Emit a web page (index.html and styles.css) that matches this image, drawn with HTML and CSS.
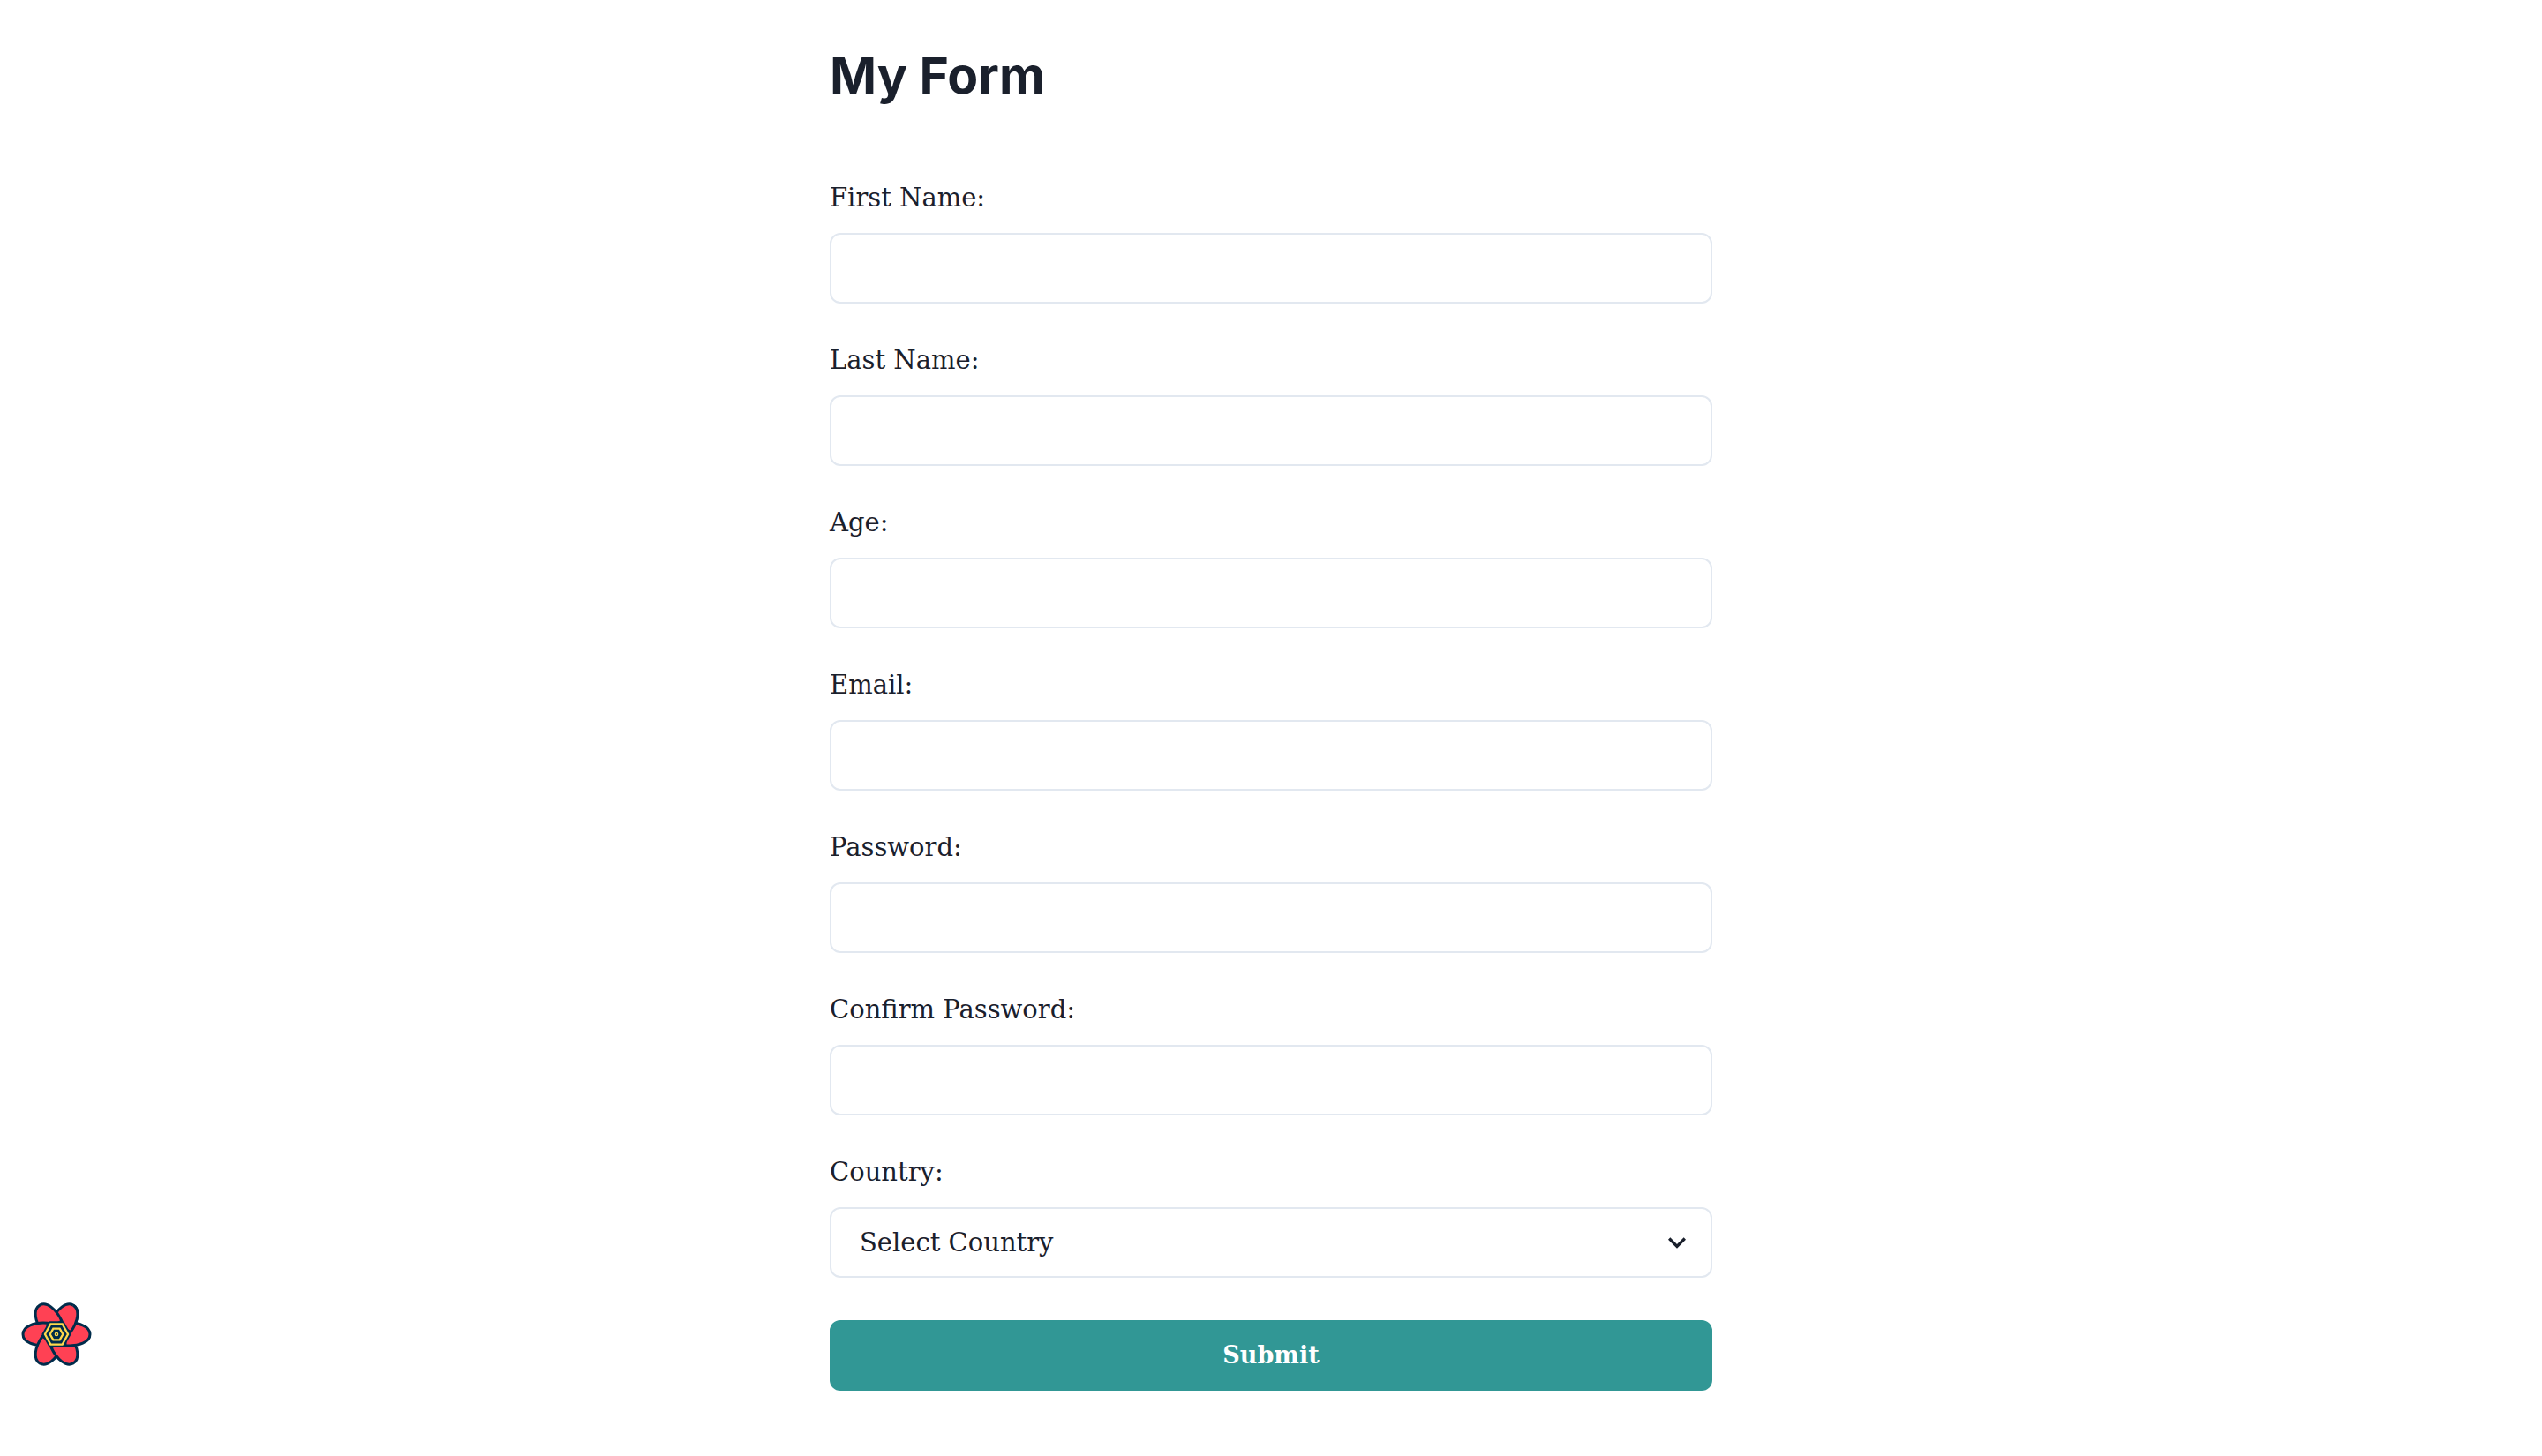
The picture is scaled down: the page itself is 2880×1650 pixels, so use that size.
FILE: index.html
```html
<!DOCTYPE html>
<html lang="en">
<head>
  <meta charset="utf-8">
  <meta name="viewport" content="width=device-width, initial-scale=1">
  <title>My Form</title>
  <link rel="stylesheet" href="styles.css">
</head>
<body>
  <main class="page">
    <h1 class="title">My Form</h1>
    <form class="form">
      <div class="field">
        <label class="label" for="firstName">First Name:</label>
        <input class="control" id="firstName" type="text">
      </div>
      <div class="field">
        <label class="label" for="lastName">Last Name:</label>
        <input class="control" id="lastName" type="text">
      </div>
      <div class="field">
        <label class="label" for="age">Age:</label>
        <input class="control" id="age" type="number">
      </div>
      <div class="field">
        <label class="label" for="email">Email:</label>
        <input class="control" id="email" type="email">
      </div>
      <div class="field">
        <label class="label" for="password">Password:</label>
        <input class="control" id="password" type="password">
      </div>
      <div class="field">
        <label class="label" for="confirmPassword">Confirm Password:</label>
        <input class="control" id="confirmPassword" type="password">
      </div>
      <div class="field">
        <label class="label" for="country">Country:</label>
        <div class="select-wrap">
          <select class="control select" id="country">
            <option value="">Select Country</option>
          </select>
          <svg class="chevron" viewBox="0 0 24 24" aria-hidden="true"><path fill="currentColor" d="M16.59 8.59L12 13.17 7.41 8.59 6 10l6 6 6-6z"/></svg>
        </div>
      </div>
      <button class="submit" type="submit">Submit</button>
    </form>
  </main>

  <button class="devtools" type="button" aria-label="Open query devtools">
    <svg class="flower" viewBox="-120 -120 240 240" aria-hidden="true">
      <defs>
        <path id="petal" d="M-38 -30 C-42 -76 -27 -114 0 -114 C27 -114 42 -76 38 -30 Z"/>
        <clipPath id="half"><path d="M0 -125 H60 V-20 H0 Z"/></clipPath>
      </defs>
      <g fill="#ff4154" stroke="#002c4b" stroke-width="9" stroke-linejoin="round">
        <use href="#petal" transform="rotate(30)"/>
        <use href="#petal" transform="rotate(-30)"/>
        <use href="#petal" transform="rotate(-90)"/>
        <use href="#petal" transform="rotate(-150)"/>
        <use href="#petal" transform="rotate(150)"/>
        <use href="#petal" transform="rotate(90)"/>
        <g transform="rotate(30)"><use href="#petal" clip-path="url(#half)"/></g>
      </g>
      <path fill="#002c4b" d="M-50 0 L-25 -44 H25 L50 0 L25 44 H-25 Z"/>
      <g fill="none" stroke="#ffd94c" stroke-width="7">
        <path d="M-39 0 L-20 -35 H20 L39 0 L20 35 H-20 Z"/>
        <path d="M-22 0 L-11 -19 H11 L22 0 L11 19 H-11 Z"/>
      </g>
      <circle r="5" fill="#002c4b" stroke="#ffd94c" stroke-width="4"/>
    </svg>
  </button>
</body>
</html>
```
FILE: styles.css
```css
* {
  box-sizing: border-box;
}

body {
  margin: 0;
  background: #fff;
  color: #1a202c;
  font-family: "Roboto Slab", "DejaVu Serif", serif;
  font-size: 29px;
  line-height: 32px;
}

.page {
  max-width: 1064px;
  margin: 0 auto;
  padding: 48px 32px 64px;
}

.title {
  margin: 0 0 84px;
  font-family: Inter, sans-serif;
  font-size: 57px;
  font-weight: 700;
  line-height: 76px;
}

.form {
  display: flex;
  flex-direction: column;
  gap: 48px;
}

.field {
  display: flex;
  flex-direction: column;
  gap: 24px;
}

.label {
  align-self: flex-start;
}

.control {
  width: 100%;
  height: 80px;
  padding: 0 32px;
  border: 2px solid #e2e8f0;
  border-radius: 12px;
  background: #fff;
  color: inherit;
  font: inherit;
}

.select-wrap {
  position: relative;
}

.select {
  display: block;
  appearance: none;
}

.chevron {
  position: absolute;
  top: 20px;
  right: 20px;
  width: 40px;
  height: 40px;
  pointer-events: none;
}

.submit {
  height: 80px;
  padding: 0 32px;
  border: 0;
  border-radius: 12px;
  background: #319795;
  color: #fff;
  font: inherit;
  font-size: 27px;
  font-weight: 600;
}

.devtools {
  position: fixed;
  bottom: 98px;
  left: 24px;
  padding: 0;
  border: 0;
  background: none;
}

.flower {
  display: block;
  width: 80px;
  height: 80px;
}
```
